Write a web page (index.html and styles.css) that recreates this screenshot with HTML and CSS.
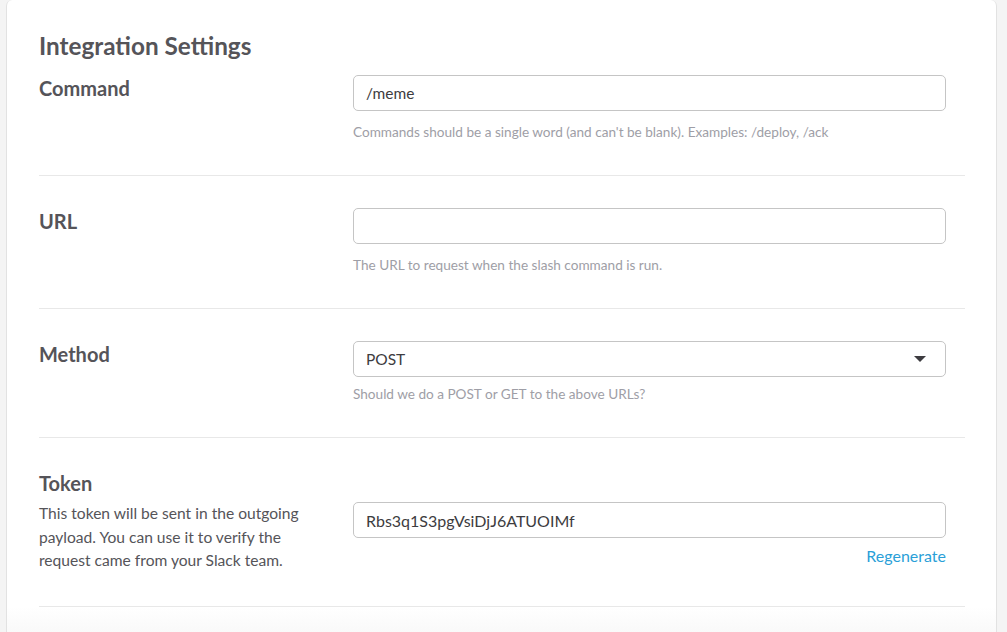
FILE: index.html
```html
<!DOCTYPE html>
<html lang="en">
<head>
<meta charset="utf-8">
<title>Integration Settings</title>
<link rel="stylesheet" href="styles.css">
</head>
<body>
<main class="card">
  <h2 class="card-title">Integration Settings</h2>

  <section class="row row-first">
    <div class="label-col"><label class="label" for="cmd">Command</label></div>
    <div class="field-col">
      <input id="cmd" class="input" type="text" value="/meme">
      <p class="help">Commands should be a single word (and can't be blank). Examples: /deploy, /ack</p>
    </div>
  </section>

  <section class="row">
    <div class="label-col"><label class="label" for="url">URL</label></div>
    <div class="field-col">
      <input id="url" class="input" type="text" value="">
      <p class="help">The URL to request when the slash command is run.</p>
    </div>
  </section>

  <section class="row row-method">
    <div class="label-col"><label class="label" for="method">Method</label></div>
    <div class="field-col">
      <div class="select">
        <span class="select-value">POST</span>
        <svg class="caret" width="12" height="6" viewBox="0 0 12 6" aria-hidden="true"><path d="M0 0H12L6 6Z" fill="#3d3c40"/></svg>
      </div>
      <p class="help help-tight">Should we do a POST or GET to the above URLs?</p>
    </div>
  </section>

  <section class="row row-token">
    <div class="label-col">
      <label class="label" for="token">Token</label>
      <p class="desc">This token will be sent in the outgoing payload. You can use it to verify the request came from your Slack team.</p>
    </div>
    <div class="field-col field-token">
      <input id="token" class="input input-token" type="text" value="Rbs3q1S3pgVsiDjJ6ATUOIMf">
      <div class="regen-wrap"><a class="regen" href="#">Regenerate</a></div>
    </div>
  </section>

  <div class="card-foot"></div>
</main>
</body>
</html>
```

FILE: styles.css
```css
* { box-sizing: border-box; }

html, body {
  margin: 0;
  padding: 0;
  height: 100%;
}

body {
  background: #f4f4f4;
  font-family: Lato, "Noto Sans", "Liberation Sans", sans-serif;
  color: #555459;
  overflow: hidden;
  padding-left: 6px;
  padding-right: 10px;
}

.card {
  background: #fff;
  border-left: 1px solid #e2e2e2;
  border-right: 1px solid #e2e2e2;
  border-top-left-radius: 6px;
  border-top-right-radius: 6px;
  padding: 31px 31px 0 32px;
  min-height: 100%;
}

.card-title {
  margin: 0 0 14px;
  font-size: 24.3px;
  line-height: 30px;
  font-weight: 700;
  color: #555459;
}

.row {
  display: flex;
  border-bottom: 1px solid #e8e8e8;
  padding: 32px 0 33px;
}

.row-first {
  padding-top: 0;
}

.label-col {
  width: 314px;
  flex: none;
}

.field-col {
  width: 593px;
  flex: none;
}

.label {
  display: block;
  font-size: 20px;
  line-height: 26px;
  font-weight: 700;
  color: #555459;
}

.input {
  display: block;
  width: 100%;
  height: 36px;
  border: 1px solid #c5c5c5;
  border-radius: 5px;
  padding: 0 12px;
  font-family: inherit;
  font-size: 15.5px;
  color: #3d3c40;
  background: #fff;
  outline: none;
}

.input-token {
  font-size: 16px;
}

.help {
  margin: 11px 0 0;
  font-size: 13.6px;
  line-height: 20px;
  color: #9e9ea6;
}

.help-tight {
  margin-top: 7px;
}

.select {
  display: flex;
  align-items: center;
  justify-content: space-between;
  height: 36px;
  border: 1px solid #c5c5c5;
  border-radius: 5px;
  padding: 0 19px 0 12px;
  font-size: 15.5px;
  color: #3d3c40;
}

.caret {
  display: block;
}

.desc {
  margin: 6px 0 0;
  font-size: 15.6px;
  line-height: 23.5px;
  color: #555459;
  width: 275px;
}

.row-token {
  padding-bottom: 33px;
}

.field-token {
  padding-top: 32px;
}

.regen-wrap {
  display: flex;
  justify-content: flex-end;
  margin-top: 8px;
}

.regen {
  font-size: 16px;
  line-height: 20px;
  color: #2a9fd8;
  text-decoration: none;
}

.card-foot {
  height: 40px;
  margin: 0 -31px 0 -32px;
  background: linear-gradient(#ffffff, #f6f6f6);
}
```
